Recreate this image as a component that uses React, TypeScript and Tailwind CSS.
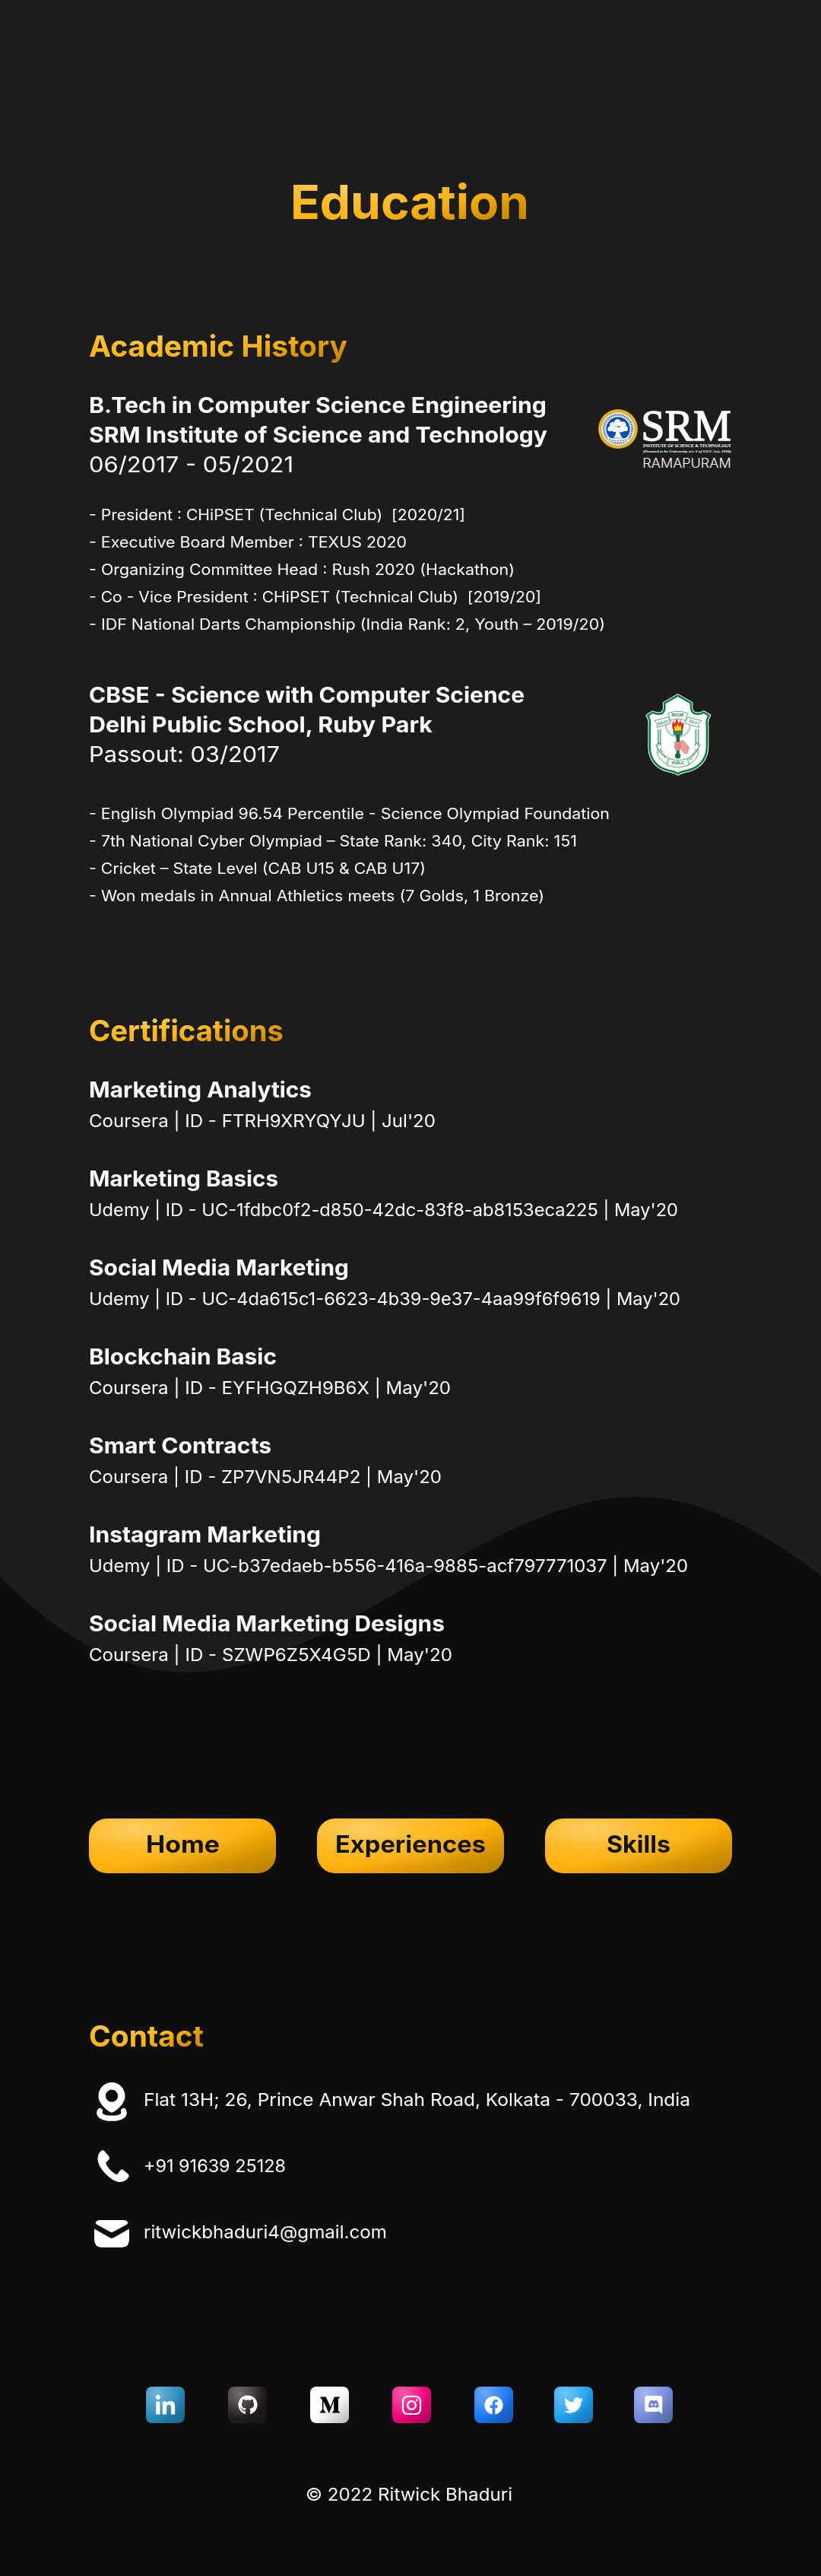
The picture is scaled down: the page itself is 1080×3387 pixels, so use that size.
import { useLayoutEffect, useRef } from "react";
import type { ReactNode } from "react";
import { FaFacebook, FaGithub, FaInstagram, FaLinkedinIn, FaMediumM, FaTwitter } from "react-icons/fa";

/** One line of text, widened so that it fills exactly `w` pixels. */
function Line({ w, className = "", children }: { w: number; className?: string; children: string }) {
  const ref = useRef<HTMLSpanElement>(null);
  useLayoutEffect(() => {
    const el = ref.current;
    if (!el) return;
    el.style.transform = "none";
    const natural = el.getBoundingClientRect().width;
    el.style.transform = `scaleX(${w / natural})`;
    el.style.marginRight = `${w - natural}px`;
  }, [w, children]);
  return (
    <span ref={ref} className={`inline-block shrink-0 origin-left whitespace-pre ${className}`}>
      {children}
    </span>
  );
}

const gold =
  "bg-[radial-gradient(ellipse_at_25%_20%,rgba(252,206,100,1)_0%,rgba(254,194,66,0.6)_30%,rgba(255,176,4,0)_68%),linear-gradient(to_bottom_right,#ffb004_50%,#bd8300_94%)]";
const goldText = gold + " bg-clip-text text-transparent";

function Heading({ w, children }: { w: number; children: string }) {
  return (
    <h2 className="flex h-12 items-start leading-[50px]">
      <Line w={w} className={`text-[38.5px] font-bold ${goldText}`}>
        {children}
      </Line>
    </h2>
  );
}

function SrmLogo() {
  return (
    <svg viewBox="0 0 630 330" className="-mr-[17px] mt-[7px] h-[110px] w-[210px] shrink-0">
      <circle cx="129" cy="132" r="78" fill="#c99b0c" />
      <circle cx="129" cy="132" r="72" fill="none" stroke="#ecc63c" strokeWidth="5" />
      <circle cx="129" cy="132" r="66" fill="#eceef2" />
      <circle cx="129" cy="132" r="56" fill="none" stroke="#45577e" strokeWidth="9" strokeDasharray="5 3" strokeOpacity="0.75" />
      <circle cx="129" cy="132" r="47" fill="#0a4ea8" />
      <g fill="#f1f4f8">
        <circle cx="127" cy="108" r="14" />
        <circle cx="108" cy="117" r="12" />
        <circle cx="148" cy="116" r="13" />
        <circle cx="98" cy="132" r="10" />
        <circle cx="116" cy="132" r="12" />
        <circle cx="142" cy="134" r="11" />
        <circle cx="158" cy="131" r="10" />
        <path d="M121 125h14c-2 16 0 28 12 42h-36c10-12 12-26 10-42z" />
        <path d="M86 164c14 6 70 7 86 0l-4 14c-20 9-58 9-78 0z" />
      </g>
      <path d="M92 174c24 7 50 7 74 0" stroke="#6f86b5" strokeWidth="4" fill="none" strokeDasharray="7 4" />
      <g fill="#fff">
        <text x="220" y="178" textLength="356" lengthAdjust="spacingAndGlyphs" fontFamily="Liberation Serif, serif" fontSize="172" stroke="#fff" strokeWidth="4">SRM</text>
        <text x="227" y="205" textLength="349" lengthAdjust="spacingAndGlyphs" fontFamily="Liberation Serif, serif" fontWeight="bold" fontSize="19">INSTITUTE OF SCIENCE &amp; TECHNOLOGY</text>
        <text x="227" y="226" textLength="349" lengthAdjust="spacingAndGlyphs" fontFamily="Liberation Serif, serif" fontWeight="bold" fontStyle="italic" fontSize="15">(Deemed to be University u/s 3 of UGC Act, 1956)</text>
        <text x="226" y="285" textLength="349" lengthAdjust="spacingAndGlyphs" fontFamily="Inter, sans-serif" fontWeight="300" fontSize="50">RAMAPURAM</text>
      </g>
    </svg>
  );
}

function DpsLogo() {
  const shield =
    "M185 44L238 74Q233 106 250 114Q270 120 288 110L308 123Q296 138 300 166V246C300 300 262 330 224 339Q198 343 186 352Q172 343 148 339C108 330 74 300 74 246V166Q78 138 66 123L86 110Q104 120 121 114Q137 106 132 74Z";
  return (
    <svg viewBox="0 0 360 390" className="mr-[13px] mt-[6px] h-[130px] w-[120px] shrink-0">
      <path d={shield} fill="#fff" stroke="#fff" strokeWidth="14" strokeLinejoin="round" />
      <path d={shield} fill="#fff" stroke="#0d7840" strokeWidth="8" strokeLinejoin="round" />
      <path d="M138 158a48 48 0 1 0 96 0" fill="none" stroke="#9ccab1" strokeWidth="9" strokeDasharray="4 1.5" />
      <g fill="none" stroke="#2e8656" strokeWidth="5" strokeDasharray="4 2">
        <path d="M108 178V238M116 178V238M256 178V238M266 178V238" />
      </g>
      <path d="M104 242l8-12 8 12M252 242l8-12 8 12" stroke="#2e8656" strokeWidth="3" fill="none" />
      <g fill="#fff" stroke="#3b8d62" strokeWidth="2.5" strokeLinejoin="round">
        <path d="M92 143L148 128l10 25-56 16 3-13z" />
        <path d="M278 143L223 128l-10 25 56 16-3-13z" />
        <path d="M147 113Q185 99 224 113l-8 29q-30-12-61 0z" />
        <path d="M99 236Q106 272 148 292l-2 23Q108 302 102 262l6-5z" />
        <path d="M272 236Q262 272 224 292l2 23Q262 302 268 262l-6-5z" />
        <path d="M150 292q36 13 72 0l8 26-17 4q-28 10-56 0l-16-4z" />
      </g>
      <g fill="#2b7a4d" fontFamily="Inter, sans-serif" fontWeight="600" textAnchor="middle">
        <text x="185" y="125" fontSize="15" textLength="50">BEFORE</text>
        <text transform="translate(128 155) rotate(-16)" fontSize="14" textLength="44" lengthAdjust="spacingAndGlyphs">SERVICE</text>
        <text transform="translate(244 153) rotate(18)" fontSize="14">SELF</text>
        <text transform="translate(120 275) rotate(52)" fontSize="14">DELHI</text>
        <text transform="translate(250 278) rotate(-52)" fontSize="13">SCHOOL</text>
        <text x="186" y="314" fontSize="15" textLength="50">PUBLIC</text>
      </g>
      <path d="M168 182C158 160 164 150 169 143Q170 153 174 156Q174 143 183 136Q183 147 190 153Q192 144 197 141Q196 150 200 155L207 147Q210 170 202 182Z" fill="#dd2a1b" />
      <path d="M174 182Q168 170 173 163l6 6 5-17 6 16 5-8 4 9q2 8-4 13z" fill="#fdda1c" />
      <path d="M194 224q9-5 15 0l21 24-8 24q-15 2-19-10l-9-12z" fill="#ee9d99" stroke="#ab5f5c" strokeWidth="1.5" />
      <path d="M165 182h41l-5 18h-8l-2 72h-11l-2-72h-8z" fill="#12693c" />
      <path d="M167 187h37M170 195h31" stroke="#9fccb3" strokeWidth="2" />
      <circle cx="185" cy="281" r="11" fill="#12693c" />
      <g fill="#ee9d99" stroke="#a85c5a" strokeWidth="1.5">
        <rect x="172" y="227" width="24" height="8" rx="4" />
        <rect x="171" y="236" width="24" height="8" rx="4" />
        <rect x="172" y="245" width="23" height="8" rx="4" />
        <rect x="175" y="254" width="19" height="7" rx="3.500" />
      </g>
    </svg>
  );
}

type Row = [string, number];

function Entry({ title, place, date, items, gap, logo }: { title: Row; place: Row; date: Row; items: Row[]; gap: string; logo: ReactNode }) {
  return (
    <article className={`flex flex-col ${gap}`}>
      <header className="flex h-[117px] items-start justify-between">
        <div className="flex flex-col items-start text-[28.5px] leading-[39px]">
          <Line w={title[1]} className="font-bold">{title[0]}</Line>
          <Line w={place[1]} className="font-bold">{place[0]}</Line>
          <Line w={date[1]}>{date[0]}</Line>
        </div>
        {logo}
      </header>
      <ul className="flex flex-col items-start text-[19.5px] leading-9">
        {items.map(([text, w]) => (
          <li key={text} className="flex h-9"><Line w={w}>{text}</Line></li>
        ))}
      </ul>
    </article>
  );
}

const certs: { title: Row; detail: Row }[] = [
  { title: ["Marketing Analytics", 293], detail: ["Coursera | ID - FTRH9XRYQYJU | Jul'20", 456] },
  { title: ["Marketing Basics", 249], detail: ["Udemy | ID - UC-1fdbc0f2-d850-42dc-83f8-ab8153eca225 | May'20", 775] },
  { title: ["Social Media Marketing", 342], detail: ["Udemy | ID - UC-4da615c1-6623-4b39-9e37-4aa99f6f9619 | May'20", 778] },
  { title: ["Blockchain Basic", 247], detail: ["Coursera | ID - EYFHGQZH9B6X | May'20", 476] },
  { title: ["Smart Contracts", 240], detail: ["Coursera | ID - ZP7VN5JR44P2 | May'20", 464] },
  { title: ["Instagram Marketing", 305], detail: ["Udemy | ID - UC-b37edaeb-b556-416a-9885-acf797771037 | May'20", 788] },
  { title: ["Social Media Marketing Designs", 468], detail: ["Coursera | ID - SZWP6Z5X4G5D | May'20", 478] },
];

const pages: Row[] = [["Home", 97], ["Experiences", 198], ["Skills", 84]];

function PinIcon() {
  return (
    <svg viewBox="0 0 42 51" className="mt-[5px] h-[51px] w-[42px]" fill="#fff">
      <path fillRule="evenodd" d="M21 0C11 0 3.5 7.8 3.5 18C3.5 26 10 33 18 38.6Q21 40.8 24 38.6C32 33 38.5 26 38.5 18C38.5 7.8 31 0 21 0ZM21 9.6a8 8 0 1 1 0 16.2a8 8 0 1 1 0-16.2z" />
      <path d="M5.5 37.5C3 43 9 47.2 21 47.2C33 47.2 39 43 36.5 37.5" fill="none" stroke="#fff" strokeWidth="7.2" strokeLinecap="round" />
    </svg>
  );
}

function PhoneIcon() {
  return (
    <svg viewBox="0 0 42 42" className="ml-1 h-[42px] w-[42px]" fill="#fff">
      <path d="M4.5 1.4Q7.5-1 9.6 1.6L15.4 8.4Q17 10.7 14.8 13L11.4 16.2Q11 18.4 13.6 22Q19.5 29.6 24.6 31.9Q26 32.4 27 31L30 26.8Q31.8 24.6 34.2 26.3L40.6 31.6Q42.4 33.4 41.2 35.4Q37 42.4 28.4 41.9Q20.3 41 10.6 31Q1.4 21 .5 13Q.2 5.4 4.5 1.4Z" />
    </svg>
  );
}

function MailIcon() {
  return (
    <svg viewBox="0 0 46 36" className="mt-[4px] h-9 w-[46px]" fill="#fff">
      <path d="M8 0H38Q43.5 0 44.5 3.8Q44 5 42.8 5.8L25 15.6Q23 16.8 21 15.6L3.2 5.8Q2 5 1.5 3.8Q2.5 0 8 0Z" />
      <path d="M0 11.4L20.6 23.2Q23 24.6 25.4 23.2L46 11.4V24.5Q46 36 35.5 36H10.5Q0 36 0 24.5Z" />
    </svg>
  );
}

function DiscordIcon() {
  return (
    <svg viewBox="0 0 24 25" className="h-[25px] w-6">
      <path d="M3 0h17.5q2.7 0 2.7 2.8V24l-5-4-1-1 .6 2H3Q.3 21 .3 18.200V2.800Q.3 0 3 0z" fill="#fff" />
      <path d="M7.600 6.300l2-.7.6.8h3.300l.6-.8 2 .7q2.800 3.500 2.700 8-1.600 1.700-3.900 1.700l-.8-1.300h-4.500l-.8 1.300q-2.300 0-3.900-1.700 0-4.500 2.700-8z" fill="#7385d0" />
      <circle cx="9.400" cy="11.700" r="1.400" fill="#fff" />
      <circle cx="14.400" cy="11.700" r="1.400" fill="#fff" />
    </svg>
  );
}

const contacts: { icon: ReactNode; text: string; w: number }[] = [
  { icon: <PinIcon />, text: "Flat 13H; 26, Prince Anwar Shah Road, Kolkata - 700033, India", w: 719 },
  { icon: <PhoneIcon />, text: "+91 91639 25128", w: 187 },
  { icon: <MailIcon />, text: "ritwickbhaduri4@gmail.com", w: 320 },
];

const socials: { name: string; tile: string; icon: ReactNode }[] = [
  { name: "LinkedIn", tile: "ml-0 bg-[#258abb]", icon: <FaLinkedinIn size={29} className="mt-0.5" /> },
  { name: "GitHub", tile: "ml-[57px] bg-[#221d1a]", icon: <FaGithub size={26} /> },
  { name: "Medium", tile: "ml-[57px] bg-white text-black", icon: <FaMediumM size={28} /> },
  { name: "Instagram", tile: "ml-[57px] bg-[#f00078]", icon: <FaInstagram size={29} /> },
  { name: "Facebook", tile: "ml-[57px] bg-[#1877f2]", icon: <FaFacebook size={25} /> },
  { name: "Twitter", tile: "ml-[54px] bg-[#1da1f2]", icon: <FaTwitter size={25} /> },
  { name: "Discord", tile: "ml-[54px] bg-[#7389dc]", icon: <DiscordIcon /> },
];

export default function App() {
  return (
    <div className="relative isolate h-[3387px] w-[1080px] overflow-hidden bg-[#1c1c1c] font-['Inter',sans-serif] text-white">
      <svg viewBox="0 0 1080 1419" className="absolute bottom-0 left-0 -z-10 h-[1419px] w-[1080px]">
        <path d="M0 105C82 190 164 231 246 231C344 231 443 173 541 115C640 58 738 0 837.500 0C918 0 1000 42 1080 104V1419H0Z" fill="#0d0d0d" />
      </svg>

      <main className="flex flex-col px-[117px] pt-[230px]">
        <h1 className="flex h-[72px] justify-center pr-0.5 leading-[72px]">
          <Line w={314} className={`text-[62px] font-bold ${goldText}`}>Education</Line>
        </h1>

        <section className="mt-32">
          <Heading w={340}>Academic History</Heading>
          <div className="mt-[35px] flex flex-col gap-[55px]">
            <Entry
              title={["B.Tech in Computer Science Engineering", 602]}
              place={["SRM Institute of Science and Technology", 603]}
              date={["06/2017 - 05/2021", 269]}
              items={[
                ["- President : CHiPSET (Technical Club)  [2020/21]", 495],
                ["- Executive Board Member : TEXUS 2020", 418],
                ["- Organizing Committee Head : Rush 2020 (Hackathon)", 560],
                ["- Co - Vice President : CHiPSET (Technical Club)  [2019/20]", 595],
                ["- IDF National Darts Championship (India Rank: 2, Youth – 2019/20)", 679],
              ]}
              gap="gap-[29px]"
              logo={<SrmLogo />}
            />
            <Entry
              title={["CBSE - Science with Computer Science", 573]}
              place={["Delhi Public School, Ruby Park", 452]}
              date={["Passout: 03/2017", 251]}
              items={[
                ["- English Olympiad 96.54 Percentile - Science Olympiad Foundation", 685],
                ["- 7th National Cyber Olympiad – State Rank: 340, City Rank: 151", 642],
                ["- Cricket – State Level (CAB U15 & CAB U17)", 443],
                ["- Won medals in Annual Athletics meets (7 Golds, 1 Bronze)", 599],
              ]}
              gap="gap-[41px]"
              logo={<DpsLogo />}
            />
          </div>
        </section>

        <section className="mt-[134px]">
          <Heading w={256}>Certifications</Heading>
          <ul className="mt-[35px] flex flex-col gap-[38px]">
            {certs.map(({ title, detail }) => (
              <li key={title[0]} className="flex h-[79px] flex-col items-start gap-1">
                <Line w={title[1]} className="text-[28.5px] leading-[39px] font-bold">{title[0]}</Line>
                <Line w={detail[1]} className="text-[23px] leading-9">{detail[0]}</Line>
              </li>
            ))}
          </ul>
        </section>

        <nav className="mt-[197px] flex gap-[54px]">
          {pages.map(([text, w]) => (
            <a key={text} className={`flex h-[72px] w-[246px] items-center justify-center rounded-3xl pb-1 text-[#111] ${gold}`}>
              <Line w={w} className="text-[31px] font-bold">{text}</Line>
            </a>
          ))}
        </nav>

        <section className="mt-[189px]">
          <Heading w={151}>Contact</Heading>
          <ul className="mt-[43px] flex flex-col gap-[51px]">
            {contacts.map(({ icon, text, w }) => (
              <li key={text} className="flex h-9 items-center">
                <span className="mr-3 flex w-[60px] justify-center">{icon}</span>
                <Line w={w} className="text-[23px] leading-9">{text}</Line>
              </li>
            ))}
          </ul>
        </section>

        <div className="mt-[185px] flex pl-[75px]">
          {socials.map(({ name, tile, icon }) => (
            <a key={name} aria-label={name} className={`flex h-12 w-[51px] items-center justify-center rounded-lg bg-[radial-gradient(circle_at_28%_18%,rgba(255,255,255,0.36)_0%,rgba(255,255,255,0)_62%),linear-gradient(to_bottom_right,rgba(0,0,0,0)_50%,rgba(0,0,0,0.26)_95%)] ${tile}`}>
              {icon}
            </a>
          ))}
        </div>

        <footer className="mt-[76px] flex h-9 justify-center pr-1 leading-9">
          <Line w={272} className="text-[23px]">© 2022 Ritwick Bhaduri</Line>
        </footer>
      </main>
    </div>
  );
}
